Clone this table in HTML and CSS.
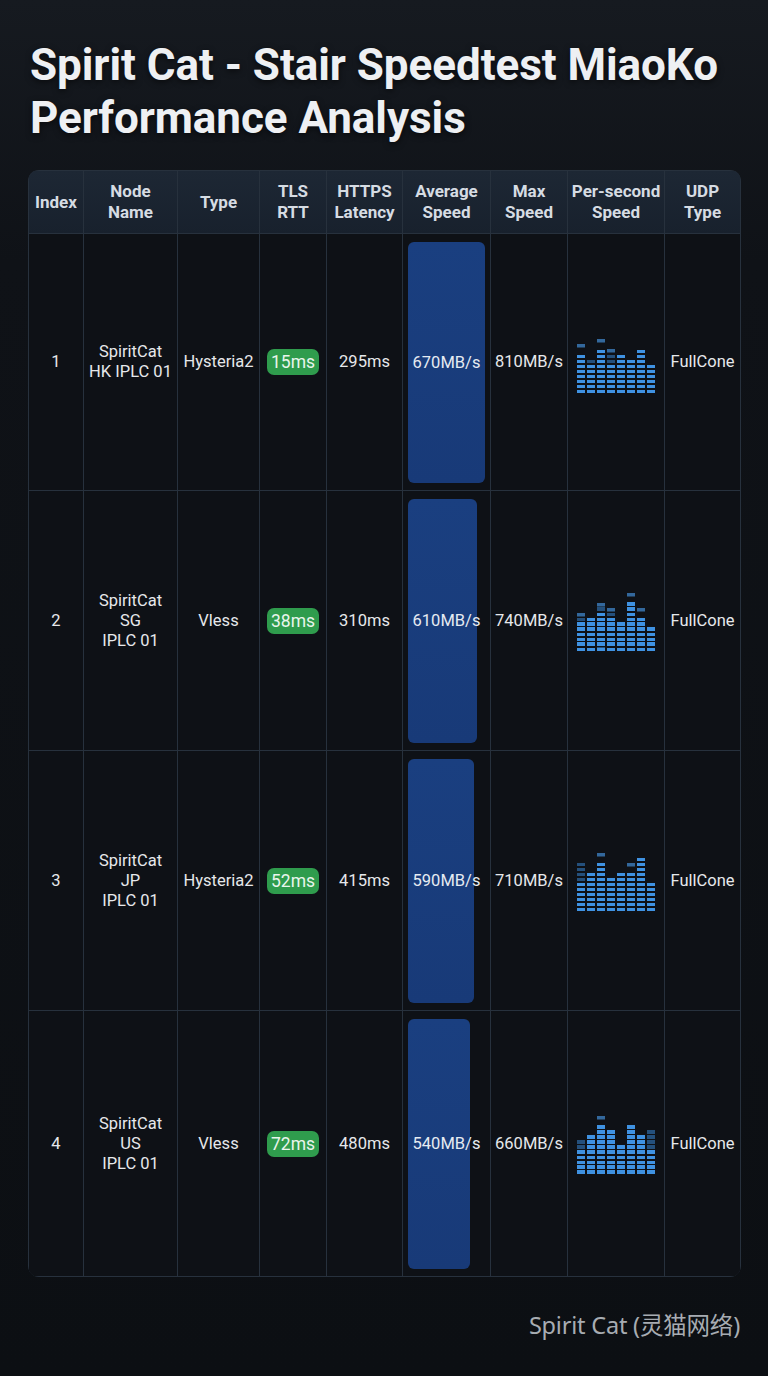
FILE: index.html
```html
<!DOCTYPE html>
<html lang="en">
<head>
<meta charset="utf-8">
<title>Spirit Cat - Stair Speedtest MiaoKo Performance Analysis</title>
<link rel="stylesheet" href="styles.css">
</head>
<body>
<main class="page">
  <h1 class="title">Spirit Cat - Stair Speedtest MiaoKo Performance Analysis</h1>

  <section class="table">
    <div class="th">Index</div>
    <div class="th">Node<br>Name</div>
    <div class="th">Type</div>
    <div class="th">TLS<br>RTT</div>
    <div class="th">HTTPS<br>Latency</div>
    <div class="th">Average<br>Speed</div>
    <div class="th">Max<br>Speed</div>
    <div class="th">Per-second<br>Speed</div>
    <div class="th">UDP<br>Type</div>

    <!-- row 1 -->
    <div class="td">1</div>
    <div class="td">SpiritCat<br>HK IPLC 01</div>
    <div class="td">Hysteria2</div>
    <div class="td"><span class="badge">15ms</span></div>
    <div class="td">295ms</div>
    <div class="td avg"><span class="avg-bar" style="width:77px"></span><span class="avg-text">670MB/s</span></div>
    <div class="td">810MB/s</div>
    <div class="td"><div class="eq">
      <span class="eq-col" style="--b:8;--d:0;--p:10"></span>
      <span class="eq-col" style="--b:6;--d:1;--p:-2"></span>
      <span class="eq-col" style="--b:9;--d:0;--p:11"></span>
      <span class="eq-col" style="--b:6;--d:2;--p:9"></span>
      <span class="eq-col" style="--b:8;--d:0;--p:-2"></span>
      <span class="eq-col" style="--b:7;--d:0;--p:-2"></span>
      <span class="eq-col" style="--b:9;--d:0;--p:-2"></span>
      <span class="eq-col" style="--b:6;--d:0;--p:-2"></span>
    </div></div>
    <div class="td">FullCone</div>

    <!-- row 2 -->
    <div class="td">2</div>
    <div class="td">SpiritCat<br>SG<br>IPLC 01</div>
    <div class="td">Vless</div>
    <div class="td"><span class="badge">38ms</span></div>
    <div class="td">310ms</div>
    <div class="td avg"><span class="avg-bar" style="width:69px"></span><span class="avg-text">610MB/s</span></div>
    <div class="td">740MB/s</div>
    <div class="td"><div class="eq">
      <span class="eq-col" style="--b:6;--d:1;--p:8"></span>
      <span class="eq-col" style="--b:7;--d:0;--p:-2"></span>
      <span class="eq-col" style="--b:8;--d:1;--p:10"></span>
      <span class="eq-col" style="--b:7;--d:1;--p:9"></span>
      <span class="eq-col" style="--b:6;--d:0;--p:-2"></span>
      <span class="eq-col" style="--b:10;--d:0;--p:12"></span>
      <span class="eq-col" style="--b:7;--d:0;--p:9"></span>
      <span class="eq-col" style="--b:5;--d:0;--p:-2"></span>
    </div></div>
    <div class="td">FullCone</div>

    <!-- row 3 -->
    <div class="td">3</div>
    <div class="td">SpiritCat<br>JP<br>IPLC 01</div>
    <div class="td">Hysteria2</div>
    <div class="td"><span class="badge">52ms</span></div>
    <div class="td">415ms</div>
    <div class="td avg"><span class="avg-bar" style="width:66px"></span><span class="avg-text">590MB/s</span></div>
    <div class="td">710MB/s</div>
    <div class="td"><div class="eq">
      <span class="eq-col" style="--b:6;--d:4;--p:-2"></span>
      <span class="eq-col" style="--b:8;--d:0;--p:-2"></span>
      <span class="eq-col" style="--b:10;--d:0;--p:12"></span>
      <span class="eq-col" style="--b:7;--d:0;--p:-2"></span>
      <span class="eq-col" style="--b:8;--d:0;--p:-2"></span>
      <span class="eq-col" style="--b:8;--d:0;--p:10"></span>
      <span class="eq-col" style="--b:11;--d:0;--p:-2"></span>
      <span class="eq-col" style="--b:6;--d:0;--p:-2"></span>
    </div></div>
    <div class="td">FullCone</div>

    <!-- row 4 -->
    <div class="td">4</div>
    <div class="td">SpiritCat<br>US<br>IPLC 01</div>
    <div class="td">Vless</div>
    <div class="td"><span class="badge">72ms</span></div>
    <div class="td">480ms</div>
    <div class="td avg"><span class="avg-bar" style="width:62px"></span><span class="avg-text">540MB/s</span></div>
    <div class="td">660MB/s</div>
    <div class="td"><div class="eq">
      <span class="eq-col" style="--b:5;--d:2;--p:-2"></span>
      <span class="eq-col" style="--b:8;--d:0;--p:-2"></span>
      <span class="eq-col" style="--b:10;--d:0;--p:12"></span>
      <span class="eq-col" style="--b:9;--d:0;--p:-2"></span>
      <span class="eq-col" style="--b:6;--d:0;--p:-2"></span>
      <span class="eq-col" style="--b:10;--d:0;--p:-2"></span>
      <span class="eq-col" style="--b:8;--d:0;--p:-2"></span>
      <span class="eq-col" style="--b:5;--d:4;--p:-2"></span>
    </div></div>
    <div class="td">FullCone</div>
  </section>

  <footer class="footer">Spirit Cat (灵猫网络)</footer>
</main>
</body>
</html>
```

FILE: styles.css
```css
* { box-sizing: border-box; }

html, body {
  margin: 0;
  padding: 0;
}

body {
  width: 768px;
  min-height: 1376px;
  background: linear-gradient(180deg, #161a20 0px, #0f1217 260px, #0c0f13 1376px);
  font-family: Roboto, "Noto Sans", "Liberation Sans", sans-serif;
  color: #e6e8eb;
}

.page {
  padding: 39px 28px 0 28px;
  display: flex;
  flex-direction: column;
}

.title {
  margin: 0 0 25px 2px;
  font-size: 44px;
  line-height: 53px;
  font-weight: 700;
  color: #eef0f3;
  letter-spacing: -0.05px;
  text-shadow: 0 2px 6px rgba(0, 0, 0, 0.6);
}

.table {
  display: grid;
  grid-template-columns: 54px 93px 81px 66px 75px 87px 76px 96px 75px;
  grid-template-rows: 62px 256px 259px 259px 265px;
  gap: 1px;
  padding: 1px;
  width: 713px;
  background: #27313d;
  border-radius: 11px;
  overflow: hidden;
}

.th {
  background: linear-gradient(180deg, #1d2734 0%, #18212d 100%);
  color: #d6dce3;
  font-weight: 700;
  font-size: 17px;
  line-height: 21px;
  display: flex;
  align-items: center;
  justify-content: center;
  text-align: center;
}

.td {
  background: #0e1116;
  font-size: 16.5px;
  line-height: 20px;
  color: #e6e8eb;
  display: flex;
  align-items: center;
  justify-content: center;
  text-align: center;
}

.badge {
  display: inline-block;
  background: #2f9c4d;
  color: #e9f5ec;
  border-radius: 7px;
  padding: 3px 4px;
  font-size: 17.5px;
  line-height: 20px;
}

.avg {
  display: grid;
  grid-template: 1fr / 1fr;
  align-items: stretch;
  justify-items: start;
  padding: 8px 0 7px 5px;
}

.avg-bar {
  grid-area: 1 / 1;
  background: linear-gradient(180deg, #1a3f80 0%, #183a78 100%);
  border-radius: 6px;
}

.avg-text {
  grid-area: 1 / 1;
  align-self: center;
  justify-self: center;
  margin-left: -5px;
  width: 87px;
  text-align: center;
  color: #e6ebf2;
}

.eq {
  display: flex;
  align-items: flex-end;
  gap: 2px;
  height: 60px;
  margin-top: 1px;
}

.eq-col {
  --seg-on: #3f92e2;
  --seg-dim: #24507c;
  --seg-peak: #33689c;
  width: 8px;
  height: 60px;
  background-image:
    repeating-linear-gradient(to top, var(--seg-on) 0 3.5px, transparent 3.5px 5px),
    repeating-linear-gradient(to top, var(--seg-dim) 0 3.5px, transparent 3.5px 5px),
    linear-gradient(var(--seg-peak), var(--seg-peak));
  background-repeat: no-repeat;
  background-size:
    100% calc(var(--b) * 5px),
    100% calc((var(--b) + var(--d)) * 5px),
    100% 3.5px;
  background-position:
    left 0 bottom 0,
    left 0 bottom 0,
    left 0 bottom calc((var(--p) - 1) * 5px);
}

.footer {
  align-self: flex-end;
  margin-top: 33px;
  font-family: "Noto Sans", "Noto Sans CJK SC", sans-serif;
  font-size: 23.5px;
  line-height: 30px;
  color: #a7acb2;
  letter-spacing: -0.2px;
}
```
